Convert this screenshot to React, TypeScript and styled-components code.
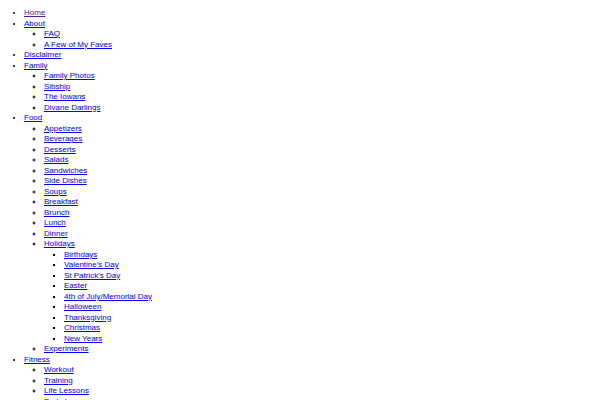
import React from "react";
import styled, { createGlobalStyle } from "styled-components";

const Global = createGlobalStyle`
  html, body { background: #ffffff; }
  body {
    margin: 8px 8px 8px 4px;
    font-family: "Liberation Sans", Arial, sans-serif;
    font-size: 8px;
    line-height: 10.5px;
    color: #000;
  }
`;

const List = styled.ul<{ $level: number }>`
  margin: 0;
  padding-left: 20px;
  list-style-type: ${(p) => (p.$level === 1 ? "disc" : p.$level === 2 ? "circle" : "square")};
`;

const Item = styled.li`
  line-height: 10.5px;
`;

const Link = styled.a<{ $visited?: boolean }>`
  color: ${(p) => (p.$visited ? "#551a8b" : "#0000ee")};
  text-decoration: underline;
`;

type Node = { label: string; visited?: boolean; children?: Node[] };

const menu: Node[] = [
  { label: "Home", visited: true },
  { label: "About", children: [{ label: "FAQ" }, { label: "A Few of My Faves" }] },
  { label: "Disclaimer" },
  {
    label: "Family",
    children: [
      { label: "Family Photos" },
      { label: "Sibship" },
      { label: "The Iowans" },
      { label: "Divane Darlings" },
    ],
  },
  {
    label: "Food",
    children: [
      { label: "Appetizers" },
      { label: "Beverages" },
      { label: "Desserts" },
      { label: "Salads" },
      { label: "Sandwiches" },
      { label: "Side Dishes" },
      { label: "Soups" },
      { label: "Breakfast" },
      { label: "Brunch" },
      { label: "Lunch" },
      { label: "Dinner" },
      {
        label: "Holidays",
        children: [
          { label: "Birthdays" },
          { label: "Valentine's Day" },
          { label: "St Patrick's Day" },
          { label: "Easter" },
          { label: "4th of July/Memorial Day" },
          { label: "Halloween" },
          { label: "Thanksgiving" },
          { label: "Christmas" },
          { label: "New Years" },
        ],
      },
      { label: "Experiments" },
    ],
  },
  {
    label: "Fitness",
    children: [
      { label: "Workout" },
      { label: "Training" },
      { label: "Life Lessons" },
      { label: "Body Image" },
      { label: "Races" },
    ],
  },
];

const Tree = ({ nodes, level }: { nodes: Node[]; level: number }) => (
  <List $level={level}>
    {nodes.map((n) => (
      <Item key={n.label}>
        <Link href="#" $visited={n.visited}>
          {n.label}
        </Link>
        {n.children && <Tree nodes={n.children} level={level + 1} />}
      </Item>
    ))}
  </List>
);

export default function App() {
  return (
    <>
      <Global />
      <Tree nodes={menu} level={1} />
    </>
  );
}
